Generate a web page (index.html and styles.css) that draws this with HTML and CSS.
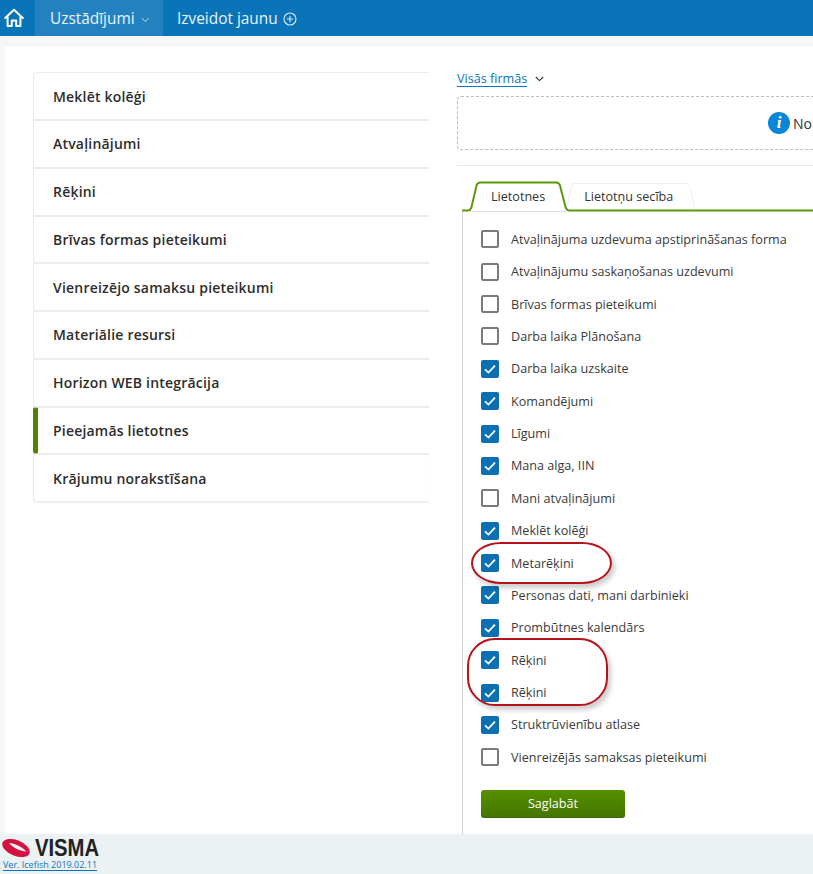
FILE: index.html
```html
<!DOCTYPE html>
<html lang="lv">
<head>
<meta charset="utf-8">
<title>Uzstādījumi</title>
<link rel="stylesheet" href="styles.css">
</head>
<body>
<header class="nav">
  <a class="home" aria-label="Sākums">
    <svg width="20" height="20" viewBox="0 0 20 20" fill="none" stroke="#fff" stroke-width="2" stroke-linejoin="round" stroke-linecap="round"><path d="M1.2 10 10 1.8 18.8 10"/><path d="M3.6 9v9h4.2v-5.4h4.400V18h4.200V9"/></svg>
  </a>
  <a class="nav-item active">Uzstādījumi
    <svg class="nav-chev" width="9" height="6" viewBox="0 0 9 6" fill="none" stroke="#cfe3f2" stroke-width="1"><path d="M.8 1 4.500 4.600 8.200 1"/></svg>
  </a>
  <a class="nav-item">Izveidot jaunu
    <svg class="nav-plus" width="14" height="14" viewBox="0 0 14 14" fill="none" stroke="#dcebf6" stroke-width="1.1"><circle cx="7" cy="7" r="6"/><path d="M7 3.800v6.400M3.800 7h6.400"/></svg>
  </a>
</header>
<main class="page">
  <div class="card">
    <nav class="side">
      <a class="side-item">Meklēt kolēģi</a>
      <a class="side-item">Atvaļinājumi</a>
      <a class="side-item">Rēķini</a>
      <a class="side-item">Brīvas formas pieteikumi</a>
      <a class="side-item">Vienreizējo samaksu pieteikumi</a>
      <a class="side-item">Materiālie resursi</a>
      <a class="side-item">Horizon WEB integrācija</a>
      <a class="side-item current">Pieejamās lietotnes</a>
      <a class="side-item">Krājumu norakstīšana</a>
    </nav>
    <section class="content">
      <div class="scope"><a class="scope-link">Visās firmās</a>
        <svg width="9" height="6" viewBox="0 0 9 6" fill="none" stroke="#333" stroke-width="1.100"><path d="M.8 1 4.500 4.600 8.200 1"/></svg>
      </div>
      <div class="notice">
        <span class="info">i</span><span class="notice-text">Nok</span>
      </div>
      <hr class="rule">
      <div class="tabs">
        <svg class="tab-shape" width="351" height="31" viewBox="0 0 351 31" fill="none">
          <path d="M105 29.500 109 5.500Q110 2.500 113 2.500H224Q227 2.500 228 5.500L233 29.500" fill="#fff" stroke="#efefef"/>
          <path d="M0 29.500H6Q8.500 29.500 9.500 26L14.500 4.500Q15.500 1.500 18.500 1.500H94Q97 1.500 98 4.500L103.500 26Q104.500 29.500 107.500 29.500H351" fill="#fff" stroke="#5a9a0a" stroke-width="2"/>
          <path d="M8 30.500H104" stroke="#dcdcdc"/>
        </svg>
        <div class="tab first">Lietotnes</div>
        <div class="tab second">Lietotņu secība</div>
      </div>
      <div class="panel">
        <ul class="checks">
          <li class="check"><span class="box"></span>Atvaļinājuma uzdevuma apstiprināšanas forma</li>
          <li class="check"><span class="box"></span>Atvaļinājumu saskaņošanas uzdevumi</li>
          <li class="check"><span class="box"></span>Brīvas formas pieteikumi</li>
          <li class="check"><span class="box"></span>Darba laika Plānošana</li>
          <li class="check"><span class="box on"><svg width="18" height="18" viewBox="0 0 18 18"><path d="M4 9.400 7.400 12.600 14 5.600"/></svg></span>Darba laika uzskaite</li>
          <li class="check"><span class="box on"><svg width="18" height="18" viewBox="0 0 18 18"><path d="M4 9.400 7.400 12.600 14 5.600"/></svg></span>Komandējumi</li>
          <li class="check"><span class="box on"><svg width="18" height="18" viewBox="0 0 18 18"><path d="M4 9.400 7.400 12.600 14 5.600"/></svg></span>Līgumi</li>
          <li class="check"><span class="box on"><svg width="18" height="18" viewBox="0 0 18 18"><path d="M4 9.400 7.400 12.600 14 5.600"/></svg></span>Mana alga, IIN</li>
          <li class="check"><span class="box"></span>Mani atvaļinājumi</li>
          <li class="check"><span class="box on"><svg width="18" height="18" viewBox="0 0 18 18"><path d="M4 9.400 7.400 12.600 14 5.600"/></svg></span>Meklēt kolēģi</li>
          <li class="check"><span class="box on"><svg width="18" height="18" viewBox="0 0 18 18"><path d="M4 9.400 7.400 12.600 14 5.600"/></svg></span>Metarēķini</li>
          <li class="check"><span class="box on"><svg width="18" height="18" viewBox="0 0 18 18"><path d="M4 9.400 7.400 12.600 14 5.600"/></svg></span>Personas dati, mani darbinieki</li>
          <li class="check"><span class="box on"><svg width="18" height="18" viewBox="0 0 18 18"><path d="M4 9.400 7.400 12.600 14 5.600"/></svg></span>Prombūtnes kalendārs</li>
          <li class="check"><span class="box on"><svg width="18" height="18" viewBox="0 0 18 18"><path d="M4 9.400 7.400 12.600 14 5.600"/></svg></span>Rēķini</li>
          <li class="check"><span class="box on"><svg width="18" height="18" viewBox="0 0 18 18"><path d="M4 9.400 7.400 12.600 14 5.600"/></svg></span>Rēķini</li>
          <li class="check"><span class="box on"><svg width="18" height="18" viewBox="0 0 18 18"><path d="M4 9.400 7.400 12.600 14 5.600"/></svg></span>Struktrūvienību atlase</li>
          <li class="check"><span class="box"></span>Vienreizējās samaksas pieteikumi</li>
        </ul>
        <button class="save" type="button">Saglabāt</button>
      </div>
    </section>
  </div>
  <div class="mark mark-one"></div>
  <div class="mark mark-two"></div>
</main>
<footer class="foot">
  <div class="logo">
    <svg width="28" height="18" viewBox="0 0 28 18"><ellipse cx="14" cy="9" rx="14.500" ry="7.800" transform="rotate(22 14 9)" fill="#d3123f"/><path fill="#ecf1f4" d="M7 4C12.500 4.400 19.500 7.400 24.500 12.600 18 12 11 9 7 4Z"/></svg>
    <span class="logo-word">VISMA</span>
  </div>
  <a class="version">Ver. Icefish 2019.02.11</a>
</footer>
</body>
</html>
```
FILE: styles.css
```css
* { box-sizing: border-box; }
html, body { margin: 0; height: 874px; overflow: hidden; }
body {
  display: flex;
  flex-direction: column;
  width: 813px;
  font-family: "Open Sans", "Liberation Sans", sans-serif;
  color: #333;
  background: #f7f7f7;
}
.nav {
  display: flex;
  flex: 0 0 36px;
  height: 36px;
  background: #0a74b8;
  color: #fff;
}
.home {
  display: flex;
  align-items: center;
  justify-content: center;
  width: 36px;
  padding: 0 8px 0 1px;
  border-right: 1px solid #2a83c0;
}
.nav-item {
  display: flex;
  align-items: center;
  gap: 6px;
  padding: 0 14px;
  font-size: 15.4px;
  color: #e9f3fa;
}
.nav-item.active { width: 127px; background: #2481bf; }
.nav-chev { margin-top: 3px; }
.nav-plus { margin-left: -1px; margin-top: 1px; }
.page {
  position: relative;
  flex: 1;
  min-height: 0;
  padding: 9px 0 0 5px;
  overflow: hidden;
}
.card {
  display: flex;
  height: 100%;
  padding: 26px 0 0 28px;
  background: #fff;
  border-top: 1px solid #f1f1f1;
}
.side {
  flex: 0 0 396px;
  align-self: flex-start;
  display: flex;
  flex-direction: column;
  padding-top: .3px;
}
.side-item {
  display: flex;
  align-items: center;
  height: 47.75px;
  padding-left: 19px;
  font-size: 14px;
  font-weight: 600;
  letter-spacing: .2px;
  color: #2d2d2d;
  background: #fff;
  border: 1px solid #ececec;
  border-width: 1px 0 1px 1px;
}
.side-item:first-child { border-top-left-radius: 4px; }
.side-item:last-child { border-bottom-left-radius: 4px; box-shadow: 0 1px 2px rgba(0,0,0,.06); }
.side-item.current { border-left: 5px solid #4e8400; padding-left: 15px; border-radius: 3px 0 0 3px; }
.content { flex: 0 0 auto; width: 356px; margin-left: 28px; }
.scope { display: flex; align-items: center; gap: 8px; height: 14px; font-size: 12.6px; }
.scope-link { color: #0a74b8; border-bottom: 1px solid #0a74b8; line-height: 14px; }
.notice {
  display: flex;
  align-items: center;
  width: 420px;
  height: 54px;
  margin-top: 10px;
  padding-left: 310px;
  border: 1px dashed #bdbdbd;
  border-radius: 4px;
  font-size: 14px;
  white-space: nowrap;
}
.info {
  display: flex;
  align-items: center;
  justify-content: center;
  flex: 0 0 22px;
  height: 22px;
  margin-right: 3px;
  border-radius: 50%;
  background: #0a86d6;
  color: #fff;
  font-family: "Liberation Serif", serif;
  font-style: italic;
  font-weight: 700;
  font-size: 17px;
}
.rule { width: 100%; height: 1px; margin: 15px 0 0; border: 0; background: #e8e8e8; }
.tabs {
  position: relative;
  display: flex;
  height: 31px;
  margin: 15px 0 0 5px;
}
.tab-shape { position: absolute; left: 0; top: 0; }
.tab {
  position: relative;
  padding-top: 6px;
  font-size: 12.6px;
  line-height: 19px;
  color: #333;
}
.first { margin-left: 29px; }
.second { margin-left: 39px; }
.panel {
  margin-left: 5px;
  padding: 11.100px 0 0 18px;
  height: 640px;
  border-left: 1px solid #d2d2d2;
}
.checks { list-style: none; margin: 0; padding: 0; }
.check {
  display: flex;
  align-items: center;
  height: 32.375px;
  font-size: 12.6px;
  color: #3a3a3a;
  white-space: nowrap;
}
.box {
  display: flex;
  flex: 0 0 18px;
  height: 18px;
  margin-right: 12px;
  border: 2px solid #7a7a7a;
  border-radius: 2px;
  background: #fff;
  overflow: hidden;
}
.box.on { border: 0; background: #0a6fb3; }
.box svg { display: block; }
.box path { fill: none; stroke: #fff; stroke-width: 1.800; }
.save {
  display: block;
  width: 144px;
  height: 28px;
  margin-top: 16.100px;
  padding: 0;
  font: 12.600px "Open Sans", sans-serif;
  color: #fff;
  background: linear-gradient(#559000, #447500);
  border: 0;
  border-bottom: 1px solid #3b6600;
  border-radius: 3px;
}
.mark {
  position: absolute;
  border: 2px solid #b5121b;
  box-shadow: 3px 4px 5px rgba(0,0,0,.2);
  pointer-events: none;
}
.mark-one { left: 471px; top: 506px; width: 141px; height: 42px; border-radius: 30px / 21px; }
.mark-two { left: 467px; top: 602px; width: 141px; height: 68px; border-radius: 28px; }
.foot {
  flex: 0 0 40px;
  height: 40px;
  padding: 5px 0 0 2px;
  background: #ecf1f4;
}
.logo { display: flex; align-items: center; height: 18px; gap: 5px; }
.logo-word {
  font-family: "Liberation Sans", sans-serif;
  font-weight: 700;
  font-size: 23px;
  line-height: 18px;
  color: #222;
  transform: scaleX(.88);
  transform-origin: left center;
}
.version {
  display: block;
  width: fit-content;
  margin: 2px 0 0 1px;
  font-size: 9px;
  line-height: 11px;
  color: #0a74b8;
  border-bottom: 1px solid #0a74b8;
}
```
